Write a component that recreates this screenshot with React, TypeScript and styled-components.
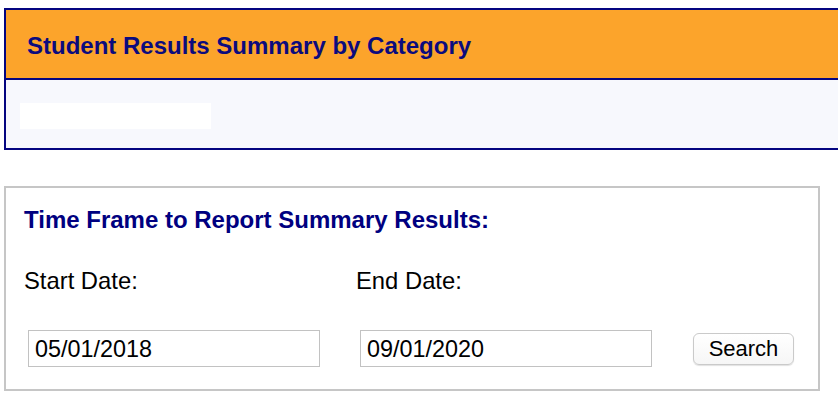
import React from 'react';
import styled, { createGlobalStyle } from 'styled-components';

const GlobalStyle = createGlobalStyle`
  body {
    margin: 0;
    overflow: hidden;
    background: #fff;
    font-family: 'Liberation Sans', Arial, sans-serif;
  }
`;

const SummaryPanel = styled.section`
  margin: 8px -20px 0 4px;
  border: 2px solid #050580;
  background-color: #f7f8fd;
`;

const PanelHeader = styled.header`
  display: flex;
  align-items: center;
  height: 70px;
  padding: 2px 0 0 21px;
  box-sizing: border-box;
  background-color: #fca42b;
  border-bottom: 2px solid #050580;
`;

const HeaderTitle = styled.h2`
  margin: 0;
  font-size: 24px;
  line-height: 27px;
  font-weight: bold;
  color: #0b0b7e;
`;

const PanelBody = styled.div`
  height: 68px;
  padding: 23px 0 0 14px;
  box-sizing: border-box;
`;

const Redacted = styled.div`
  width: 191px;
  height: 26px;
  background-color: #fff;
`;

const FilterBox = styled.form`
  width: 816px;
  box-sizing: border-box;
  margin: 36px 0 0 4px;
  padding: 18px 18px 22px;
  border: 2px solid #c6c6c6;
`;

const FilterTitle = styled.h3`
  margin: 0;
  font-size: 24px;
  line-height: 27px;
  font-weight: bold;
  color: #000080;
`;

const FieldGrid = styled.div`
  display: grid;
  grid-template-columns: 332px 332px auto;
  row-gap: 36px;
  align-items: center;
  margin-top: 34px;
`;

const Label = styled.label`
  font-size: 23.8px;
  line-height: 27px;
  color: #000;
`;

const DateInput = styled.input`
  width: 292px;
  height: 37px;
  box-sizing: border-box;
  margin-left: 4px;
  padding: 2px 6px 0;
  border: 1px solid #c2c2c2;
  border-radius: 0;
  font-family: 'Liberation Sans', Arial, sans-serif;
  font-size: 23.4px;
  color: #000;
  outline: none;
`;

const SearchButton = styled.button`
  justify-self: start;
  width: 101px;
  height: 32px;
  margin-left: 5px;
  padding: 1px 0 0;
  border: 1px solid #cacaca;
  border-radius: 6px;
  background: linear-gradient(#ffffff, #f6f6f6);
  box-shadow: 0 1px 1px rgba(0, 0, 0, 0.12);
  font-family: 'Liberation Sans', Arial, sans-serif;
  font-size: 22px;
  color: #000;
`;

const App: React.FC = () => {
  return (
    <>
      <GlobalStyle />
      <SummaryPanel>
        <PanelHeader>
          <HeaderTitle>Student Results Summary by Category</HeaderTitle>
        </PanelHeader>
        <PanelBody>
          <Redacted />
        </PanelBody>
      </SummaryPanel>
      <FilterBox onSubmit={(e) => e.preventDefault()}>
        <FilterTitle>Time Frame to Report Summary Results:</FilterTitle>
        <FieldGrid>
          <Label htmlFor="start">Start Date:</Label>
          <Label htmlFor="end">End Date:</Label>
          <span />
          <DateInput id="start" defaultValue="05/01/2018" />
          <DateInput id="end" defaultValue="09/01/2020" />
          <SearchButton type="submit">Search</SearchButton>
        </FieldGrid>
      </FilterBox>
    </>
  );
};

export default App;
